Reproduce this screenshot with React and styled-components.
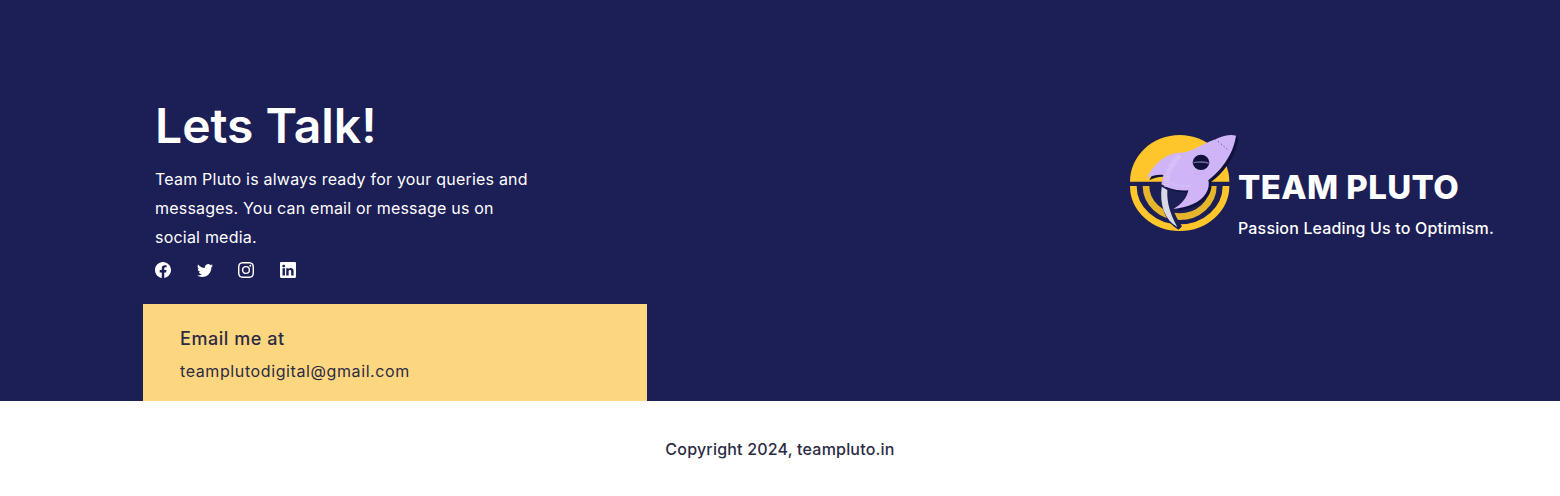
import React from 'react'
import styled, { createGlobalStyle } from 'styled-components'
import { BsFacebook, BsTwitter, BsInstagram, BsLinkedin } from 'react-icons/bs'

const GlobalStyle = createGlobalStyle`
  html, body {
    margin: 0;
    padding: 0;
    background: #fff;
    font-family: "Inter", "Noto Sans", sans-serif;
  }
`

const ROCKET = 'M348 32C335 28 312 30 288 42C262 50 236 66 214 76C200 82 188 84 175 83C140 86 100 115 80 160C95 152 112 148 130 150L124 178C140 188 170 200 205 196C200 220 185 238 160 252C200 248 240 235 258 205C266 192 268 178 265 165C300 140 340 90 348 32Z'

function RocketLogo() {
  return (
    <LogoSvg viewBox="0 0 354 345">
      <path d="M30 170A149 140 0 0 1 328 170Z" fill="#fec62b" />
      <path d="M40 183A139 125 0 0 0 318 183" fill="none" stroke="#fec62b" strokeWidth="20" />
      <path d="M78 183A101 92 0 0 0 280 183" fill="none" stroke="#e5b52c" strokeWidth="20" />
      <path d={ROCKET} fill="#10123d" transform="translate(8 6)" />
      <path d="M126 180C118 235 132 290 176 314L186 304C162 270 150 235 150 195Z" fill="#1c1e56" />
      <path d={ROCKET} fill="#cfb5f7" />
      <path d="M125 185C118 240 135 285 172 306C152 270 140 235 142 195Z" fill="#d9d9e6" />
      <ellipse cx="243" cy="112" rx="25" ry="23" fill="#10123d" />
      <path d="M220 111C234 108 252 108 266 112L266 116C252 113 234 113 220 115Z" fill="#6f6c9b" />
      <path d="M286 42L328 78" fill="none" stroke="#3b3a70" strokeWidth="3" strokeDasharray="3 8" />
      <path d="M178 92C152 120 136 150 140 186" fill="none" stroke="#f1e8ff" strokeWidth="16" strokeDasharray="2 4" opacity=".6" />
      <path d="M150 172C170 182 190 186 212 182" fill="none" stroke="#f1e8ff" strokeWidth="6" strokeDasharray="2 5" opacity=".5" />
      <path d="M222 146C236 150 248 146 256 138" fill="none" stroke="#b49bdd" strokeWidth="3" strokeDasharray="3 5" />
    </LogoSvg>
  )
}

export default function App() {
  return (
    <>
      <GlobalStyle />
      <Hero>
        <LeftColumn>
          <Intro>
            <Heading>Lets Talk!</Heading>
            <Blurb>
              Team Pluto is always ready for your queries and messages. You can email or message us on social media.
            </Blurb>
            <Socials>
              <BsFacebook />
              <BsTwitter />
              <BsInstagram />
              <BsLinkedin />
            </Socials>
          </Intro>
          <EmailCard>
            <EmailLabel>Email me at</EmailLabel>
            <EmailAddress>teamplutodigital@gmail.com</EmailAddress>
          </EmailCard>
        </LeftColumn>
        <Brand>
          <RocketLogo />
          <BrandText>
            <BrandName>TEAM PLUTO</BrandName>
            <Tagline>Passion Leading Us to Optimism.</Tagline>
          </BrandText>
        </Brand>
      </Hero>
      <Footer>Copyright 2024, teampluto.in</Footer>
    </>
  )
}

const Hero = styled.section`
  display: flex;
  justify-content: space-between;
  height: 401px;
  padding: 0 66px 0 143px;
  background: #1c1e56;
  color: #fff;
`

const LeftColumn = styled.div`
  display: flex;
  flex-direction: column;
  justify-content: flex-end;
  width: 504px;
`

const Intro = styled.div`
  padding: 0 12px 26px;
`

const Heading = styled.h1`
  margin: 0 0 3px;
  font-size: 48px;
  line-height: 72px;
  font-weight: 600;
`

const Blurb = styled.p`
  margin: 0;
  width: 385px;
  font-size: 16px;
  line-height: 29px;
  letter-spacing: 0.21px;
`

const Socials = styled.div`
  display: flex;
  gap: 25.6px;
  margin-top: 10px;
  font-size: 16px;
  line-height: 0;
`

const EmailCard = styled.div`
  display: flex;
  flex-direction: column;
  gap: 7px;
  height: 97px;
  box-sizing: border-box;
  padding: 21px 37px 0;
  background: #fdd77f;
  color: #2b2b45;
`

const EmailLabel = styled.div`
  font-size: 18px;
  line-height: 27px;
  font-weight: 500;
  letter-spacing: 0.55px;
`

const EmailAddress = styled.div`
  font-size: 16px;
  line-height: 24px;
  letter-spacing: 0.6px;
`

const Brand = styled.div`
  display: flex;
  align-self: flex-start;
  margin-top: 125px;
`

const LogoSvg = styled.svg`
  display: block;
  width: 118px;
  height: 115px;
`

const BrandText = styled.div`
  padding-top: 38px;
`

const BrandName = styled.div`
  font-size: 33px;
  line-height: 48px;
  font-weight: 800;
  letter-spacing: 0.4px;
`

const Tagline = styled.div`
  margin-top: 5px;
  font-size: 16px;
  line-height: 24px;
  font-weight: 500;
  letter-spacing: 0.16px;
`

const Footer = styled.footer`
  display: flex;
  justify-content: center;
  align-items: center;
  height: 95px;
  background: #fff;
  color: #2b2b45;
  font-size: 16px;
  font-weight: 450;
  letter-spacing: 0.2px;
`
